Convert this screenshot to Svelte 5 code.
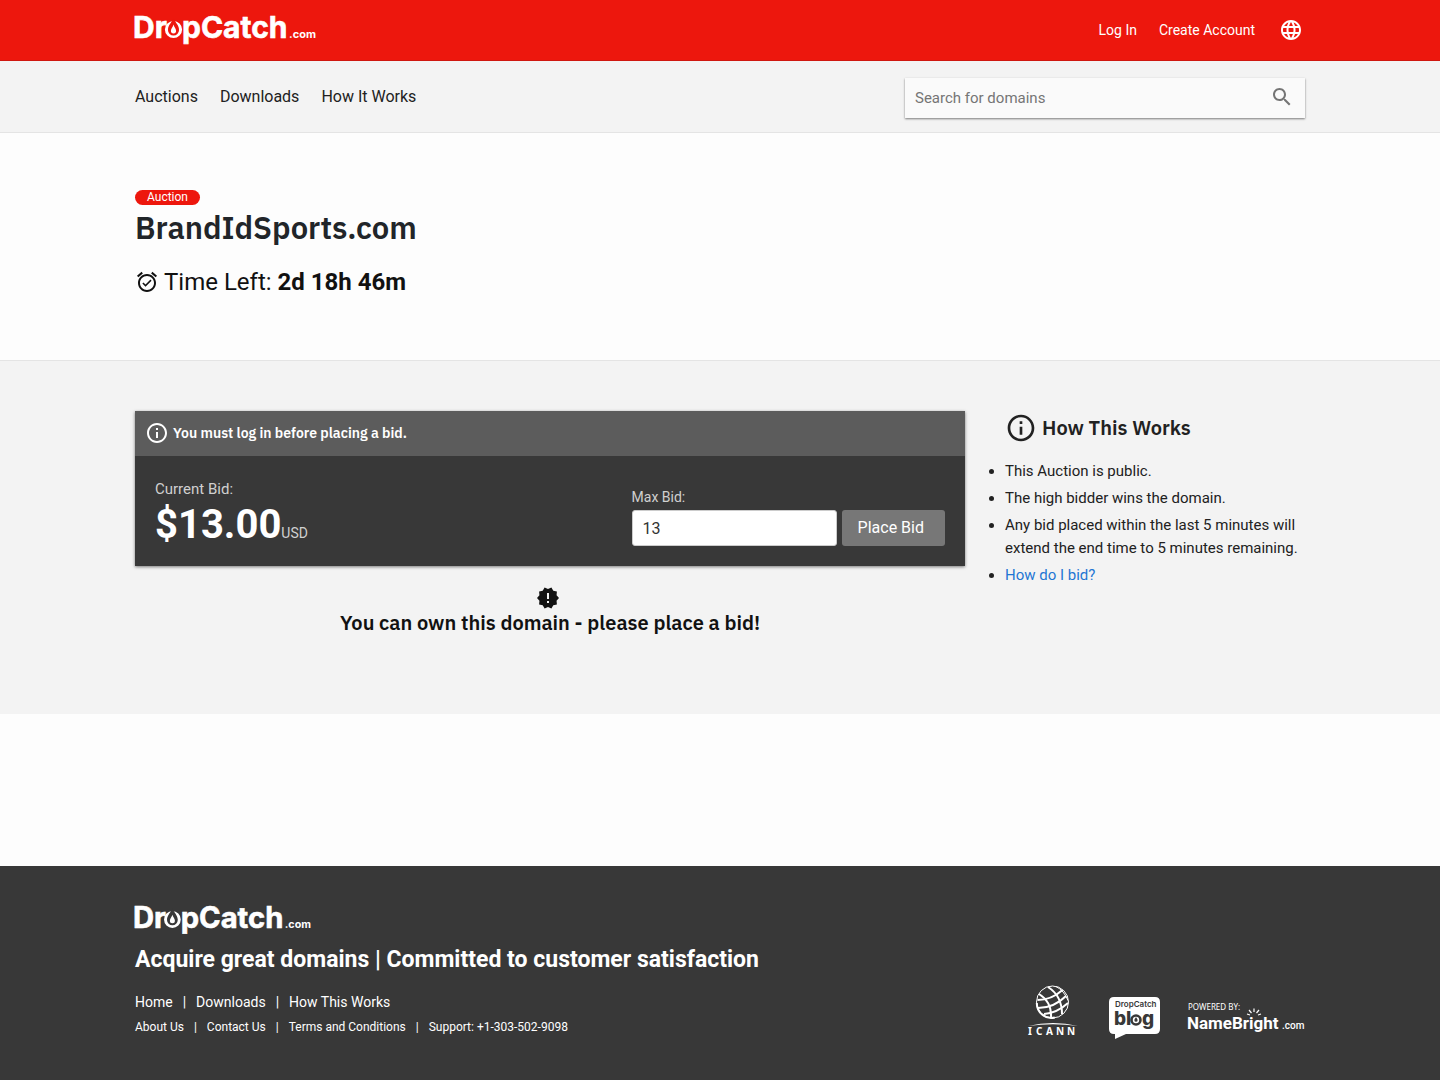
<script>
  let query = $state('');
  let bid = $state('13');

  const mainLinks = ['Auctions', 'Downloads', 'How It Works'];
  const footerLinks = ['Home', 'Downloads', 'How This Works'];
  const legalLinks = ['About Us', 'Contact Us', 'Terms and Conditions', 'Support: +1-303-502-9098'];
</script>

{#snippet logo(hole)}
  <svg class="logo" viewBox="-3 -6 187 46" role="img" aria-label="DropCatch.com">
    <circle class="ring" cx="38.500" cy="16.500" r="6.800" />
    <path class={hole} d="M38.500 5c1 4 5.500 6.500 5.500 12a5.500 5.500 0 0 1-11 0c0-5.500 4.500-8 5.500-12z" />
    <path class="drop" d="M38.500 11.500c.5 2.300 2.600 4 2.600 6.300a2.600 2.600 0 0 1-5.200 0c0-2.300 2.100-4 2.600-6.300z" />
    <g class="word">
      <text x="-2" y="25">Dr</text>
      <text x="47" y="25">pCatch</text>
    </g>
    <text class="tld" x="154" y="25">.com</text>
  </svg>
{/snippet}

{#snippet info()}
  <svg class="info" viewBox="0 0 24 24" aria-hidden="true">
    <path d="M11 7h2v2h-2zm0 4h2v6h-2zm1-9C6.480 2 2 6.480 2 12s4.480 10 10 10 10-4.480 10-10S17.520 2 12 2zm0 18c-4.410 0-8-3.590-8-8s3.590-8 8-8 8 3.590 8 8-3.590 8-8 8z" />
  </svg>
{/snippet}

<div class="page">
  <header class="top">
    <div class="container bar">
      <a class="brand" href="#home">{@render logo('hole-red')}</a>
      <nav class="account" aria-label="Account">
        <a href="#login">Log In</a>
        <a href="#create">Create Account</a>
        <button class="globe" type="button" aria-label="Language">
          <svg viewBox="0 0 24 24" aria-hidden="true"><path d="M11.990 2C6.470 2 2 6.480 2 12s4.470 10 9.990 10C17.520 22 22 17.520 22 12S17.520 2 11.990 2zm6.930 6h-2.950c-.32-1.250-.78-2.450-1.380-3.560 1.840.63 3.370 1.910 4.330 3.560zM12 4.040c.83 1.200 1.480 2.530 1.910 3.960h-3.820c.43-1.430 1.080-2.760 1.910-3.960zM4.260 14C4.100 13.360 4 12.690 4 12s.1-1.360.26-2h3.380c-.08.66-.14 1.320-.14 2 0 .68.06 1.340.14 2H4.260zm.82 2h2.950c.32 1.250.78 2.450 1.380 3.560-1.840-.63-3.370-1.900-4.330-3.560zm2.950-8H5.080c.96-1.660 2.490-2.930 4.330-3.560C8.810 5.550 8.350 6.750 8.030 8zM12 19.960c-.83-1.200-1.480-2.530-1.910-3.960h3.820c-.43 1.430-1.080 2.760-1.910 3.960zM14.340 14H9.660c-.09-.66-.16-1.320-.16-2 0-.68.07-1.350.16-2h4.680c.09.65.16 1.320.16 2 0 .68-.07 1.340-.16 2zm.25 5.560c.6-1.110 1.060-2.310 1.380-3.560h2.950c-.96 1.650-2.490 2.930-4.330 3.560zM16.360 14c.08-.66.14-1.320.14-2 0-.68-.06-1.340-.14-2h3.380c.16.64.26 1.310.26 2s-.1 1.360-.26 2h-3.380z" /></svg>
        </button>
      </nav>
    </div>
  </header>

  <div class="menu">
    <div class="container bar">
      <nav class="links" aria-label="Main">
        {#each mainLinks as label}
          <a href="#main">{label}</a>
        {/each}
      </nav>
      <form class="search" role="search">
        <input type="text" placeholder="Search for domains" aria-label="Search for domains" bind:value={query} />
        <button type="button" aria-label="Search">
          <svg viewBox="0 0 24 24" aria-hidden="true"><path d="M15.500 14h-.79l-.28-.27C15.410 12.590 16 11.110 16 9.500 16 5.910 13.090 3 9.500 3S3 5.910 3 9.500 5.910 16 9.500 16c1.610 0 3.090-.59 4.230-1.570l.27.28v.79l5 4.990L20.490 19l-4.990-5zm-6 0C7.010 14 5 11.990 5 9.500S7.010 5 9.500 5 14 7.010 14 9.500 11.990 14 9.500 14z" /></svg>
        </button>
      </form>
    </div>
  </div>

  <main>
    <section class="hero">
      <div class="container">
        <span class="badge">Auction</span>
        <h1>BrandIdSports.com</h1>
        <p class="time">
          <svg viewBox="0 0 24 24" aria-hidden="true"><path d="M22 5.720l-4.600-3.860-1.290 1.530 4.600 3.860L22 5.720zM7.880 3.390L6.600 1.860 2 5.710l1.290 1.530 4.590-3.850zM12 4c-4.970 0-9 4.030-9 9s4.020 9 9 9c4.970 0 9-4.030 9-9s-4.030-9-9-9zm0 16c-3.870 0-7-3.130-7-7s3.130-7 7-7 7 3.130 7 7-3.130 7-7 7zm-1.460-5.470L8.410 12.400l-1.060 1.060 3.180 3.180 6-6-1.060-1.060-4.930 4.950z" /></svg>
          <span>Time Left: <b>2d 18h 46m</b></span>
        </p>
      </div>
    </section>

    <section class="bidding">
      <div class="container columns">
        <div>
          <div class="card">
            <p class="notice">{@render info()}<span>You must log in before placing a bid.</span></p>
            <div class="card-body">
              <div class="current">
                <p class="label">Current Bid:</p>
                <p class="price"><b>$13.00</b><span>USD</span></p>
              </div>
              <form class="bid">
                <label for="max-bid">Max Bid:</label>
                <div class="bid-row">
                  <input id="max-bid" type="text" bind:value={bid} />
                  <button type="button">Place Bid</button>
                </div>
              </form>
            </div>
          </div>
          <div class="own">
            <svg viewBox="0 0 24 24" aria-hidden="true"><path d="M23 12l-2.440-2.780.34-3.680-3.610-.82-1.890-3.180L12 3 8.600 1.540 6.710 4.720l-3.610.81.34 3.680L1 12l2.440 2.780-.34 3.690 3.610.82 1.890 3.180L12 21l3.400 1.460 1.890-3.180 3.610-.82-.34-3.680L23 12zm-10 5h-2v-2h2v2zm0-4h-2V7h2v6z" /></svg>
            <h2>You can own this domain - please place a bid!</h2>
          </div>
        </div>

        <aside>
          <h2 class="how">{@render info()}<span>How This Works</span></h2>
          <ul>
            <li>This Auction is public.</li>
            <li>The high bidder wins the domain.</li>
            <li>Any bid placed within the last 5 minutes will extend the end time to 5 minutes remaining.</li>
            <li><a href="#how">How do I bid?</a></li>
          </ul>
        </aside>
      </div>
    </section>
  </main>

  <footer>
    <div class="container foot">
      <div>
        <a class="foot-brand" href="#home">{@render logo('hole-dark')}</a>
        <p class="tagline">Acquire great domains | Committed to customer satisfaction</p>
        <nav class="foot-links" aria-label="Footer">
          {#each footerLinks as label}<a href="#footer">{label}</a>{/each}
        </nav>
        <nav class="foot-links small" aria-label="Legal">
          {#each legalLinks as label}<a href="#legal">{label}</a>{/each}
        </nav>
      </div>
      <div class="partners">
        <a href="#icann">
          <svg class="icann" viewBox="0 0 52 56" role="img" aria-label="ICANN">
            <g class="lines">
              <circle cx="24.500" cy="19" r="16" />
              <path class="thick" d="M8.800 20c0 9 8 17 18 14.500" />
              <path class="thick" d="M9.500 17q14 0 25-10M10 25q16 0 28-12M16 31q13-1 24-11" />
              <path class="thick" d="M20 4q14 9 14 27M11 11q13 8 12 24" />
              <path d="M28 3.500q8 4 12 14" />
            </g>
            <path d="M0 43q25-6 50 0q-25-3.500-50 0z" />
            <text x="0 8 18 28 39" y="52">ICANN</text>
          </svg>
        </a>
        <a href="#blog">
          <svg class="blog" viewBox="0 0 52 44" role="img" aria-label="DropCatch blog">
            <path class="bubble" d="M6 2h41q5 0 5 5v27q0 5-5 5H18L7 44V39H6q-5 0-5-5V7q0-5 5-5z" />
            <text class="mini" x="7" y="12">DropCatch</text>
            <text class="big" x="6" y="30">bl</text>
            <text class="big" x="34" y="30">g</text>
            <circle class="eye" cx="28" cy="25" r="4.500" />
            <path class="bead" d="M28 22c.4 1.200 1.600 1.900 1.600 3.200a1.600 1.600 0 0 1-3.200 0c0-1.300 1.200-2 1.600-3.200z" />
          </svg>
        </a>
        <a href="#namebright">
          <svg class="bright" viewBox="0 0 117 42" role="img" aria-label="Powered by NameBright.com">
            <text class="by" x="0" y="13">POWERED BY:</text>
            <text class="name" x="-1" y="32">NameBright</text>
            <text class="com" x="94" y="32">.com</text>
            <path class="rays" d="M62 18l-3-1M63.500 16l-2.500-3M66 15v-3.500M68.500 16l2.500-3M70 18l3-1" />
          </svg>
        </a>
      </div>
    </div>
  </footer>
</div>

<style>
  :global(body) {
    background: #fdfdfd;
  }

  .page {
    min-height: 100vh;
    display: flex;
    flex-direction: column;
    font-family: Roboto, "Liberation Sans", sans-serif;
    font-size: 16px;
    line-height: 24px;
    color: #212121;
  }

  .page * {
    box-sizing: border-box;
  }

  h1, h2, p, ul {
    margin: 0;
    padding: 0;
  }

  a {
    color: inherit;
    text-decoration: none;
  }

  button, input {
    font: inherit;
    border: 0;
    margin: 0;
  }

  button {
    cursor: pointer;
  }

  svg {
    display: block;
    flex: none;
    overflow: visible;
    fill: currentColor;
  }

  h1, h2, .notice {
    font-family: "IBM Plex Sans", "Open Sans", "Noto Sans", sans-serif;
    font-weight: 600;
  }

  .container {
    width: 100%;
    max-width: 1170px;
    margin: 0 auto;
  }

  .bar {
    display: flex;
    justify-content: space-between;
    align-items: center;
  }

  .top {
    background: #ed170d;
    border-bottom: 1px solid #cf170f;
    color: #fff;
  }

  .top .bar {
    height: 60px;
  }

  .logo {
    width: 187px;
    height: 46px;
    margin-left: -3px;
    color: #fff;
  }

  .word {
    font: 700 30px Inter, sans-serif;
    stroke: #fff;
    stroke-width: 0.6;
  }

  .tld {
    font: 700 11px Inter, sans-serif;
  }

  .ring {
    fill: none;
    stroke: #fff;
    stroke-width: 3.6;
  }

  .hole-red {
    fill: #ed170d;
  }

  .hole-dark {
    fill: #383838;
  }

  .account {
    display: flex;
    align-items: center;
    gap: 22px;
    font-size: 14px;
  }

  .globe {
    padding: 0 2px;
    background: none;
    color: #fff;
  }

  .globe svg, .search svg {
    width: 24px;
    height: 24px;
  }

  .menu {
    background: #f3f3f3;
    border-bottom: 1px solid #e4e4e4;
  }

  .menu .bar {
    height: 71px;
  }

  .links {
    display: flex;
    gap: 22px;
  }

  .search {
    display: flex;
    align-items: center;
    width: 400px;
    height: 40px;
    margin-top: 3px;
    padding: 0 11px 0 10px;
    background: #fafafa;
    box-shadow: 0 1px 2px rgba(0, 0, 0, 0.5);
  }

  .search input {
    flex: 1;
    min-width: 0;
    padding: 0;
    background: none;
    font-size: 15px;
  }

  .search input::placeholder {
    color: #757575;
    opacity: 1;
  }

  .search button {
    padding: 0 0 2px;
    background: none;
    color: #757575;
  }

  .hero {
    padding: 57px 0 62px;
    border-bottom: 1px solid #e4e4e4;
  }

  .badge {
    display: block;
    width: fit-content;
    padding: 0 12px;
    border-radius: 8px;
    background: #ed170d;
    color: #fff;
    font-size: 12px;
    line-height: 15px;
  }

  h1 {
    font-size: 31px;
    line-height: 46px;
    color: #212529;
  }

  .time {
    display: flex;
    align-items: center;
    gap: 5px;
    margin-top: 15px;
    font-size: 24px;
    line-height: 32px;
    color: #111;
  }

  .time svg {
    width: 24px;
    height: 24px;
  }

  .bidding {
    padding: 50px 0 78px;
    background: #f3f3f3;
  }

  .columns {
    display: grid;
    grid-template-columns: minmax(0, 1fr) 300px;
    gap: 40px;
  }

  .card {
    background: #383838;
    color: #fff;
    box-shadow: 0 1px 3px rgba(0, 0, 0, 0.5);
  }

  .notice {
    display: flex;
    align-items: center;
    gap: 4px;
    height: 45px;
    padding: 0 10px 2px;
    background: #5c5c5c;
    font-size: 14px;
  }

  .info {
    width: 24px;
    height: 24px;
  }

  .card-body {
    display: flex;
    justify-content: space-between;
    align-items: flex-end;
    padding: 23px 20px 20px;
  }

  .label, .bid label {
    line-height: 20px;
    color: #d0d0d0;
  }

  .label {
    font-size: 15px;
  }

  .price {
    display: flex;
    align-items: baseline;
    margin: 6px 0 1px;
    line-height: 40px;
  }

  .price b {
    font-size: 40px;
  }

  .price span {
    font-size: 14px;
    line-height: 16px;
    color: #d0d0d0;
  }

  .bid {
    display: flex;
    flex-direction: column;
    gap: 3px;
    font-size: 14px;
  }

  .bid-row {
    display: flex;
    gap: 5px;
    font-size: 16px;
  }

  .bid-row input {
    width: 205px;
    height: 36px;
    padding: 0 10px;
    border: 1px solid #ccc;
    border-radius: 3px;
    background: #fff;
    color: #333;
  }

  .bid-row button {
    height: 36px;
    padding: 0 21px 0 16px;
    border-radius: 3px;
    background: #777;
    color: #fff;
  }

  .own {
    display: flex;
    flex-direction: column;
    align-items: center;
    padding-top: 20px;
    color: #111;
  }

  .own svg {
    width: 24px;
    height: 24px;
    margin-right: 5px;
  }

  .own h2, .how {
    font-size: 20px;
    line-height: 26px;
  }

  .how {
    display: flex;
    align-items: center;
    gap: 5px;
    height: 34px;
    color: #212121;
  }

  .how .info {
    width: 32px;
    height: 32px;
  }

  ul {
    display: flex;
    flex-direction: column;
    gap: 4px;
    margin-top: 15px;
    font-size: 15px;
    line-height: 23px;
  }

  li a {
    color: #1f76d3;
  }

  footer {
    margin-top: auto;
    padding: 31px 0 41px;
    background: #383838;
    color: #fff;
  }

  .foot {
    display: flex;
    justify-content: space-between;
    align-items: flex-end;
  }

  .foot-brand {
    display: block;
    width: fit-content;
  }

  .foot-brand .logo {
    width: 182px;
  }

  .tagline {
    margin-top: 1px;
    font-size: 23px;
    font-weight: 700;
    line-height: 32px;
  }

  .foot-links {
    display: flex;
    margin-top: 14px;
    font-size: 14px;
    line-height: 24px;
  }

  .foot-links.small {
    margin-top: 1px;
    font-size: 12px;
  }

  .foot-links a + a::before {
    content: "|";
    margin: 0 10px;
  }

  .partners {
    display: flex;
    align-items: flex-end;
    gap: 28px;
  }

  .icann {
    width: 52px;
    height: 56px;
    font: 700 10px "Noto Sans", sans-serif;
  }

  .lines {
    fill: none;
    stroke: #fff;
    stroke-width: 1;
  }

  .thick {
    stroke-width: 2;
  }

  .blog {
    width: 52px;
    height: 44px;
  }

  .mini, .big {
    fill: #383838;
  }

  .mini {
    font: 600 8px Inter, sans-serif;
  }

  .big {
    font: 800 19px Inter, sans-serif;
  }

  .eye {
    fill: none;
    stroke: #383838;
    stroke-width: 2.6;
  }

  .bead {
    fill: #383838;
  }

  .bright {
    width: 117px;
    height: 42px;
  }

  .by {
    font: 400 8px "Noto Sans", sans-serif;
  }

  .name {
    font: 700 17px Roboto, sans-serif;
  }

  .com {
    font: 500 10px Roboto, sans-serif;
  }

  .rays {
    fill: none;
    stroke: #fff;
    stroke-width: 1.2;
  }
</style>
